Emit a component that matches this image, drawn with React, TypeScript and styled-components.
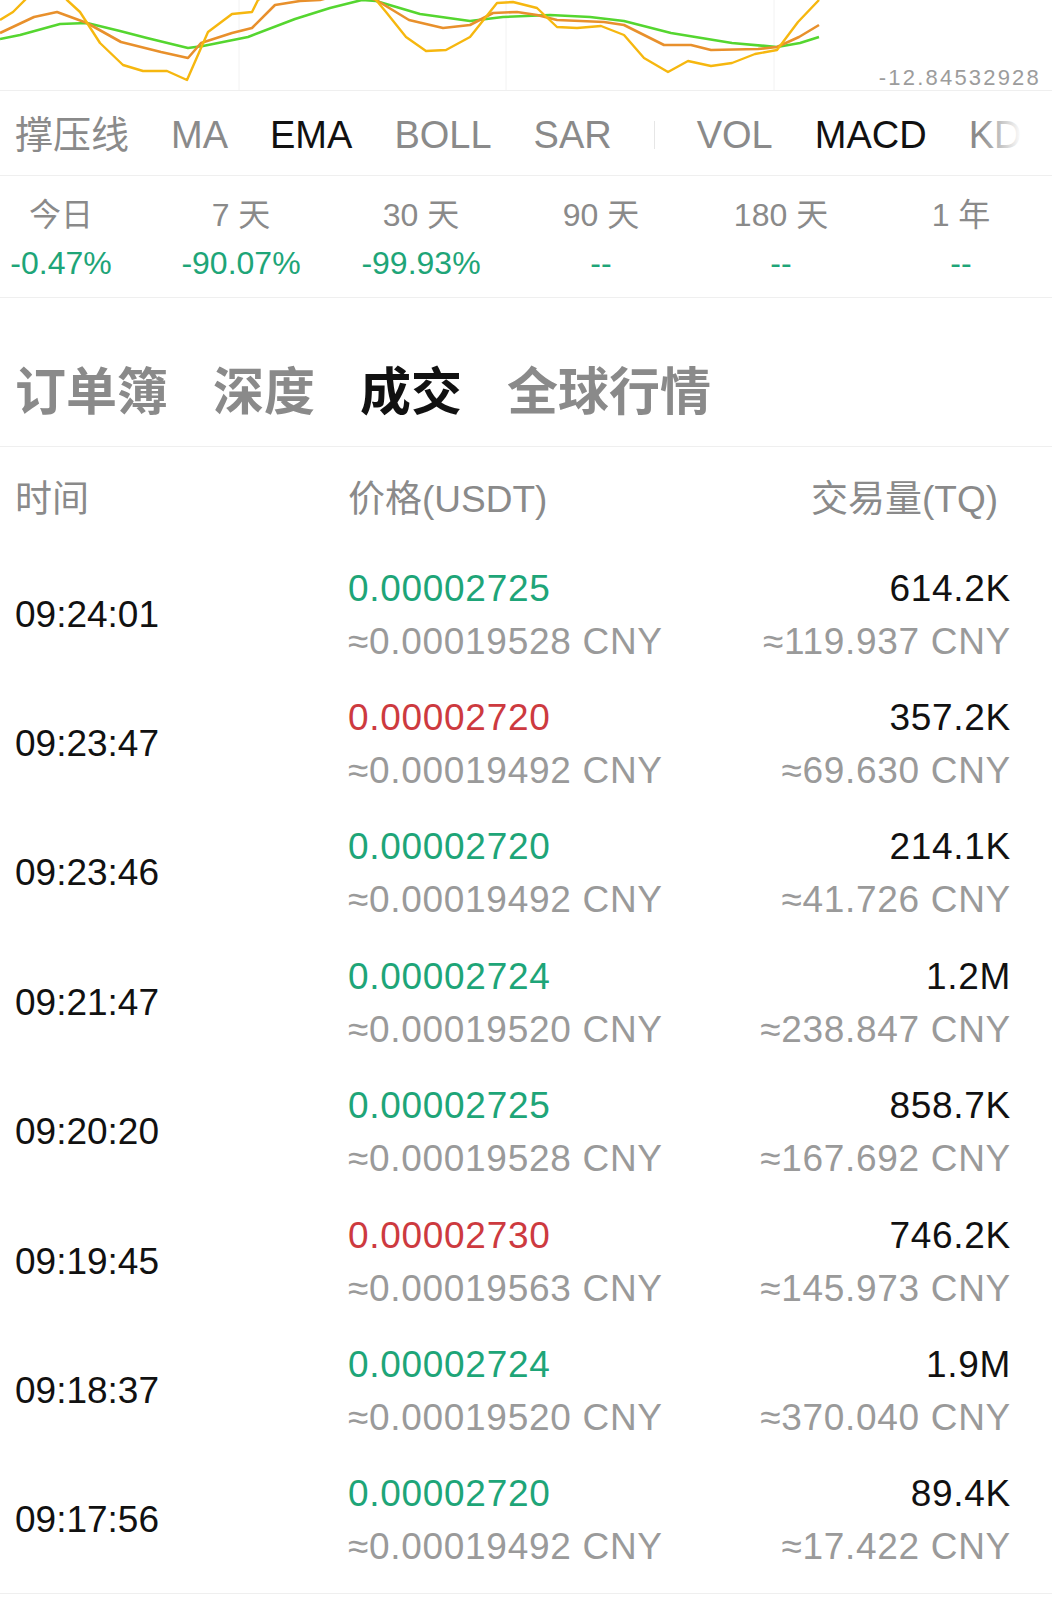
import React from 'react';
import styled, { createGlobalStyle } from 'styled-components';

const GlobalStyle = createGlobalStyle`
  html, body {
    margin: 0;
    padding: 0;
    background: #ffffff;
  }
  body {
    font-family: "Liberation Sans", "Noto Sans CJK SC", sans-serif;
    color: #111111;
  }
`;

const GREEN = '#1ea578';
const RED = '#cd3a3f';

type Tone = 'up' | 'down';

interface Trade {
    time: string;
    price: string;
    tone: Tone;
    priceCny: string;
    volume: string;
    volumeCny: string;
}

const trades: Trade[] = [
    { time: '09:24:01', price: '0.00002725', tone: 'up', priceCny: '≈0.00019528 CNY', volume: '614.2K', volumeCny: '≈119.937 CNY' },
    { time: '09:23:47', price: '0.00002720', tone: 'down', priceCny: '≈0.00019492 CNY', volume: '357.2K', volumeCny: '≈69.630 CNY' },
    { time: '09:23:46', price: '0.00002720', tone: 'up', priceCny: '≈0.00019492 CNY', volume: '214.1K', volumeCny: '≈41.726 CNY' },
    { time: '09:21:47', price: '0.00002724', tone: 'up', priceCny: '≈0.00019520 CNY', volume: '1.2M', volumeCny: '≈238.847 CNY' },
    { time: '09:20:20', price: '0.00002725', tone: 'up', priceCny: '≈0.00019528 CNY', volume: '858.7K', volumeCny: '≈167.692 CNY' },
    { time: '09:19:45', price: '0.00002730', tone: 'down', priceCny: '≈0.00019563 CNY', volume: '746.2K', volumeCny: '≈145.973 CNY' },
    { time: '09:18:37', price: '0.00002724', tone: 'up', priceCny: '≈0.00019520 CNY', volume: '1.9M', volumeCny: '≈370.040 CNY' },
    { time: '09:17:56', price: '0.00002720', tone: 'up', priceCny: '≈0.00019492 CNY', volume: '89.4K', volumeCny: '≈17.422 CNY' },
];

const indicators = [
    { label: '撑压线', active: false },
    { label: 'MA', active: false },
    { label: 'EMA', active: true },
    { label: 'BOLL', active: false },
    { label: 'SAR', active: false },
    { label: '|', active: false },
    { label: 'VOL', active: false },
    { label: 'MACD', active: true },
    { label: 'KDJ', active: false },
];

const periods = [
    { label: '今日', value: '-0.47%' },
    { label: '7 天', value: '-90.07%' },
    { label: '30 天', value: '-99.93%' },
    { label: '90 天', value: '--' },
    { label: '180 天', value: '--' },
    { label: '1 年', value: '--' },
];

const sections = [
    { label: '订单簿', active: false },
    { label: '深度', active: false },
    { label: '成交', active: true },
    { label: '全球行情', active: false },
];

// chart series, in page pixels (the top edge clips them)
const fast = '0,20 13,12 25,0 45,-25 67,0 80,12 100,43 123,65 143,71 167,71 187,80 208,32 232,14 252,12 258,0 310,-30 370,-10 376,0 386,12 406,37 426,51 446,50 470,37 497,3 513,2 537,8 557,27 577,28 601,26 624,35 644,58 668,72 688,61 711,66 732,63 755,54 777,50 798,22 819,0';
const middle = '0,33 34,17 57,12 87,23 121,42 161,52 188,58 201,43 232,33 252,28 275,5 300,1 320,0 350,-8 376,0 409,20 443,28 470,25 493,13 517,12 537,15 557,20 604,22 624,25 664,45 691,45 711,50 758,49 777,47 799,37 819,25';
const slow = '0,39 20,35 60,24 87,23 120,31 147,38 188,48 203,46 248,37 295,19 330,8 362,0 376,1 420,14 470,21 503,17 550,15 590,17 624,21 671,33 732,43 777,47 800,43 819,37';

const Page = styled.div`
  width: 1052px;
`;

const ChartArea = styled.div`
  position: relative;
  height: 90px;
  border-bottom: 1px solid #efefef;
  overflow: hidden;

  svg {
    display: block;
  }
`;

const AxisLabel = styled.span`
  position: absolute;
  right: 11px;
  bottom: 1px;
  font-size: 22px;
  line-height: 22px;
  letter-spacing: 2.2px;
  color: #9c9c9c;
`;

const IndicatorBar = styled.div`
  position: relative;
  display: flex;
  align-items: center;
  gap: 42px;
  height: 80px;
  padding: 4px 0 0 15px;
  border-bottom: 1px solid #efefef;
  overflow: hidden;
  white-space: nowrap;

  &::after {
    content: '';
    position: absolute;
    top: 0;
    right: 0;
    width: 72px;
    height: 100%;
    background: linear-gradient(to right, rgba(255, 255, 255, 0), #ffffff 58%);
  }
`;

const Indicator = styled.span<{ $active: boolean }>`
  font-size: 38px;
  line-height: 44px;
  color: ${props => props.$active ? '#111111' : '#8a8a8a'};
`;

const Divider = styled.span`
  width: 1px;
  height: 28px;
  background: #e6e6e6;
`;

const PeriodStrip = styled.div`
  display: grid;
  grid-template-columns: repeat(6, 180px);
  height: 121px;
  margin-left: -29px;
  border-bottom: 1px solid #efefef;
`;

const Period = styled.div`
  display: flex;
  flex-direction: column;
  align-items: center;
  padding-top: 19px;
`;

const PeriodLabel = styled.span`
  font-size: 32px;
  line-height: 40px;
  color: #8a8a8a;
`;

const PeriodValue = styled.span`
  margin-top: 8px;
  font-size: 32px;
  line-height: 40px;
  color: ${GREEN};
`;

const SectionTabs = styled.div`
  display: flex;
  align-items: center;
  gap: 45px;
  height: 106px;
  margin-top: 42px;
  padding-left: 15px;
  border-bottom: 1px solid #efefef;
`;

const SectionTab = styled.span<{ $active: boolean }>`
  font-size: 51px;
  font-weight: 700;
  line-height: 60px;
  color: ${props => props.$active ? '#111111' : '#8a8a8a'};
`;

const TradeTable = styled.div`
  padding-bottom: 8px;
  border-bottom: 1px solid #efefef;
`;

const HeaderRow = styled.div`
  display: flex;
  align-items: center;
  justify-content: space-between;
  height: 97px;
  padding: 0 54px 6px 15px;
  font-size: 37px;
  color: #8a8a8a;
`;

const TradeRow = styled.div`
  display: flex;
  align-items: center;
  height: 129.4px;
  padding: 0 41px 0 15px;
`;

const TimeCell = styled.div`
  width: 333px;
  flex-shrink: 0;
  font-size: 37px;
  color: #111111;
`;

const Stack = styled.div<{ $align?: 'left' | 'right' }>`
  display: flex;
  flex-direction: column;
  flex: ${props => props.$align === 'right' ? '0 0 auto' : '1'};
  align-items: ${props => props.$align === 'right' ? 'flex-end' : 'flex-start'};
  font-size: 37px;
  line-height: 53px;
  letter-spacing: 0.7px;
  white-space: nowrap;
`;

const HeaderCell = styled.div<{ $grow?: boolean }>`
  width: ${props => props.$grow ? 'auto' : '333px'};
  flex: ${props => props.$grow ? '1' : '0 0 auto'};
`;

const HeaderEnd = styled.div`
  flex: 0 0 auto;
`;

const Price = styled.span<{ $tone: Tone }>`
  color: ${props => props.$tone === 'up' ? GREEN : RED};
`;

const Main = styled.span`
  color: #111111;
`;

const Sub = styled.span`
  color: #9a9a9a;
`;

const Chart = () => (
    <ChartArea>
        <svg width="1052" height="90" viewBox="0 0 1052 90">
            {[239, 506, 774].map(x => (
                <line key={x} x1={x} y1={0} x2={x} y2={90} stroke="#f2f2f2" strokeWidth="1"/>
            ))}
            <polyline points={slow} fill="none" stroke="#55d630" strokeWidth="2.6" strokeLinejoin="round"/>
            <polyline points={middle} fill="none" stroke="#e8902c" strokeWidth="2.6" strokeLinejoin="round"/>
            <polyline points={fast} fill="none" stroke="#f6b70f" strokeWidth="2.4" strokeLinejoin="round"/>
        </svg>
        <AxisLabel>-12.84532928</AxisLabel>
    </ChartArea>
);

export default function App() {
    return (
        <Page>
            <GlobalStyle/>
            <Chart/>

            <IndicatorBar>
                {
                    indicators.map(item => item.label === '|'
                        ? <Divider key="divider"/>
                        : <Indicator key={item.label} $active={item.active}>{item.label}</Indicator>)
                }
            </IndicatorBar>

            <PeriodStrip>
                {
                    periods.map(p => (
                        <Period key={p.label}>
                            <PeriodLabel>{p.label}</PeriodLabel>
                            <PeriodValue>{p.value}</PeriodValue>
                        </Period>
                    ))
                }
            </PeriodStrip>

            <SectionTabs>
                {
                    sections.map(s => <SectionTab key={s.label} $active={s.active}>{s.label}</SectionTab>)
                }
            </SectionTabs>

            <TradeTable>
                <HeaderRow>
                    <HeaderCell>时间</HeaderCell>
                    <HeaderCell $grow>价格(USDT)</HeaderCell>
                    <HeaderEnd>交易量(TQ)</HeaderEnd>
                </HeaderRow>
                {
                    trades.map(t => (
                        <TradeRow key={t.time}>
                            <TimeCell>{t.time}</TimeCell>
                            <Stack>
                                <Price $tone={t.tone}>{t.price}</Price>
                                <Sub>{t.priceCny}</Sub>
                            </Stack>
                            <Stack $align="right">
                                <Main>{t.volume}</Main>
                                <Sub>{t.volumeCny}</Sub>
                            </Stack>
                        </TradeRow>
                    ))
                }
            </TradeTable>
        </Page>
    );
}
